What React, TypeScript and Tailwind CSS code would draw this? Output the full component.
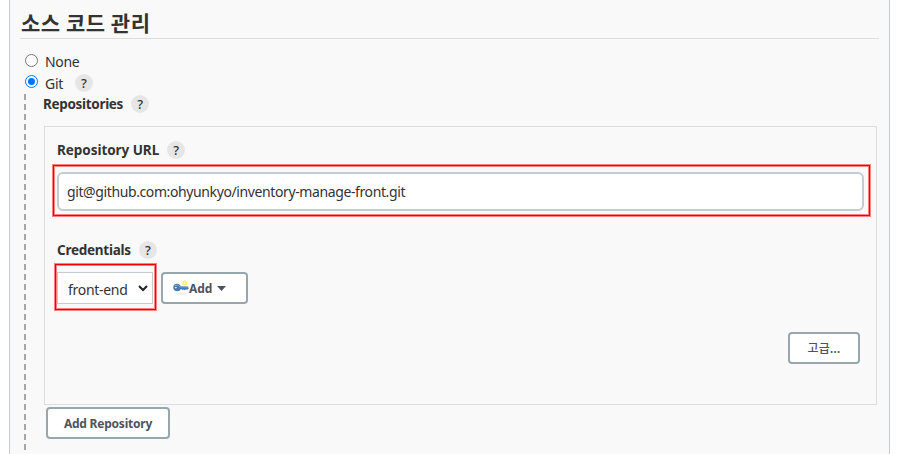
import React from "react";

function Help() {
  return (
    <span className="flex h-[18px] w-[18px] shrink-0 items-center justify-center rounded-full bg-[#e6e6e6] text-[13px] leading-none font-medium tracking-normal text-[#333]">
      ?
    </span>
  );
}

function Radio({ checked = false }: { checked?: boolean }) {
  return (
    <span
      className={`flex h-[13px] w-[13px] shrink-0 items-center justify-center rounded-full border bg-white ${
        checked ? "border-[#0075ff]" : "border-[#767676]"
      }`}
    >
      {checked && <span className="h-[7px] w-[7px] rounded-full bg-[#0075ff]" />}
    </span>
  );
}

function Highlight({ className }: { className: string }) {
  return (
    <div className={`pointer-events-none absolute border border-[#ff8080] ${className}`}>
      <div className="h-full w-full border border-[#f00000]">
        <div className="h-full w-full border border-[#ff8080]" />
      </div>
    </div>
  );
}

const button =
  "flex h-8 items-center rounded-[4px] border-2 border-[#98a6ad] bg-white text-[12px] text-[#4d545d]";

function KeyIcon() {
  return (
    <svg width="16" height="16" viewBox="0 0 16 16" className="shrink-0">
      <ellipse cx="7.5" cy="13.6" rx="6" ry="1.1" fill="#eeeeee" />
      <circle cx="11.7" cy="3" r="2.5" fill="#fff35c" />
      <circle cx="11.7" cy="3" r="1" fill="#fffbd0" />
      <path
        d="M4 3.8C1.6 3.8.2 5.3.2 7.4s1.6 3.8 4 3.8c1.8 0 3-.7 3.7-1.9h.9l.9.9 1-.7 1 .8 1-.8h2.2l.8-1.3-.8-1.6H7.9C7.1 4.8 5.9 3.8 4 3.8Z"
        fill="#4a7ab3"
      />
      <path d="M1.8 5.8c1.6-1.1 4-.7 5.2 1.1h7.3" fill="none" stroke="#7fa8d4" strokeWidth="1" />
      <ellipse cx="2.8" cy="7.6" rx="1.1" ry=".8" fill="#dce8f5" />
    </svg>
  );
}

export default function App() {
  return (
    <div className="h-[454px] overflow-hidden bg-white pl-[9px] font-['Noto_Sans','Noto_Sans_CJK_KR',sans-serif] text-[14px] text-[#333]">
      <main className="flex h-full w-[881px] flex-col border-x border-[#c3ccd1] bg-[#f9f9f9] px-[10px]">
        <h1 className="h-[39px] shrink-0 border-b border-[#ddd] pt-[7px] pl-[1px] font-['Noto_Sans_CJK_KR',sans-serif] text-[21px] leading-[30px] font-bold tracking-[0.5px]">
          소스 코드 관리
        </h1>
        <div className="mt-[12px] flex h-[20px] shrink-0 items-center pl-[5px]">
          <span className="-mt-[1px] flex"><Radio /></span>
          <span className="ml-[7px] pt-[1px] tracking-[-0.3px]">None</span>
        </div>
        <div className="mt-[2px] flex h-[20px] shrink-0 items-center pl-[5px]">
          <span className="-mt-[4px] flex"><Radio checked /></span>
          <span className="ml-[7px] tracking-[-0.3px]">Git</span>
          <span className="ml-[12px] flex"><Help /></span>
        </div>
        <div className="flex min-h-0 flex-1">
          <div className="ml-[4px] w-[2px] shrink-0 bg-[repeating-linear-gradient(to_bottom,#a6a6a6_0_6px,transparent_6px_10px)] bg-[position:0_1px] bg-no-repeat" />
          <section className="ml-[17px] w-[835px] shrink-0">
            <div className="flex h-[22px] items-center gap-[8px] text-[13.5px] font-bold tracking-[-0.32px]">
              <span>Repositories</span>
              <Help />
            </div>
            <div className="relative mt-[11px] ml-[1px] h-[279px] w-[833px] border border-[#ddd] pl-[12px]">
              <div className="flex h-[45px] items-center gap-[8px] pt-[1px] text-[13.5px] font-bold tracking-[-0.05px]">
                <span>Repository URL</span>
                <Help />
              </div>
              <input
                readOnly
                value="git@github.com:ohyunkyo/inventory-manage-front.git"
                className="block h-[39px] w-[807px] rounded-[6px] border-2 border-[#c3ccd1] bg-white px-[8px] text-[14px] tracking-[-0.39px] outline-none"
              />
              <div className="mt-[28px] flex h-[22px] items-center gap-[8px] text-[13.5px] font-bold tracking-[-0.25px]">
                <span>Credentials</span>
                <Help />
              </div>
              <div className="mt-[11px] flex gap-[8px]">
                <div className="flex h-8 w-[96px] items-center border border-[#c3ccd1] bg-white pl-[10px]">
                  <span className="w-[59px] pt-[3px] tracking-[-0.3px] whitespace-nowrap">front-end</span>
                  <svg width="10" height="7" viewBox="0 0 10 7" className="ml-[11px]">
                    <path d="m1 1 4 4 4-4" fill="none" stroke="#222" strokeWidth="2" />
                  </svg>
                </div>
                <button className={`${button} w-[87px] pl-[10px] font-bold`}>
                  <KeyIcon />
                  <span className="pt-[2px] tracking-[-0.1px]">Add</span>
                  <svg width="9" height="5" viewBox="0 0 9 5" className="ml-[5px]">
                    <path d="M0 0h9L4.5 5Z" fill="#4d545d" />
                  </svg>
                </button>
              </div>
              <div className="mt-[28px] flex justify-end pr-[16px]">
                <button className={`${button} w-[72px] justify-center font-['Noto_Sans_CJK_KR',sans-serif] font-medium`}>
                  고급...
                </button>
              </div>
              <Highlight className="top-[37px] left-[7px] h-[53px] w-[819px]" />
              <Highlight className="top-[136px] left-[9px] h-[48px] w-[103px]" />
            </div>
            <button className={`${button} mt-[2px] ml-[3px] w-[124px] justify-center pt-[2px] font-bold tracking-[-0.22px]`}>
              Add Repository
            </button>
          </section>
        </div>
      </main>
    </div>
  );
}
